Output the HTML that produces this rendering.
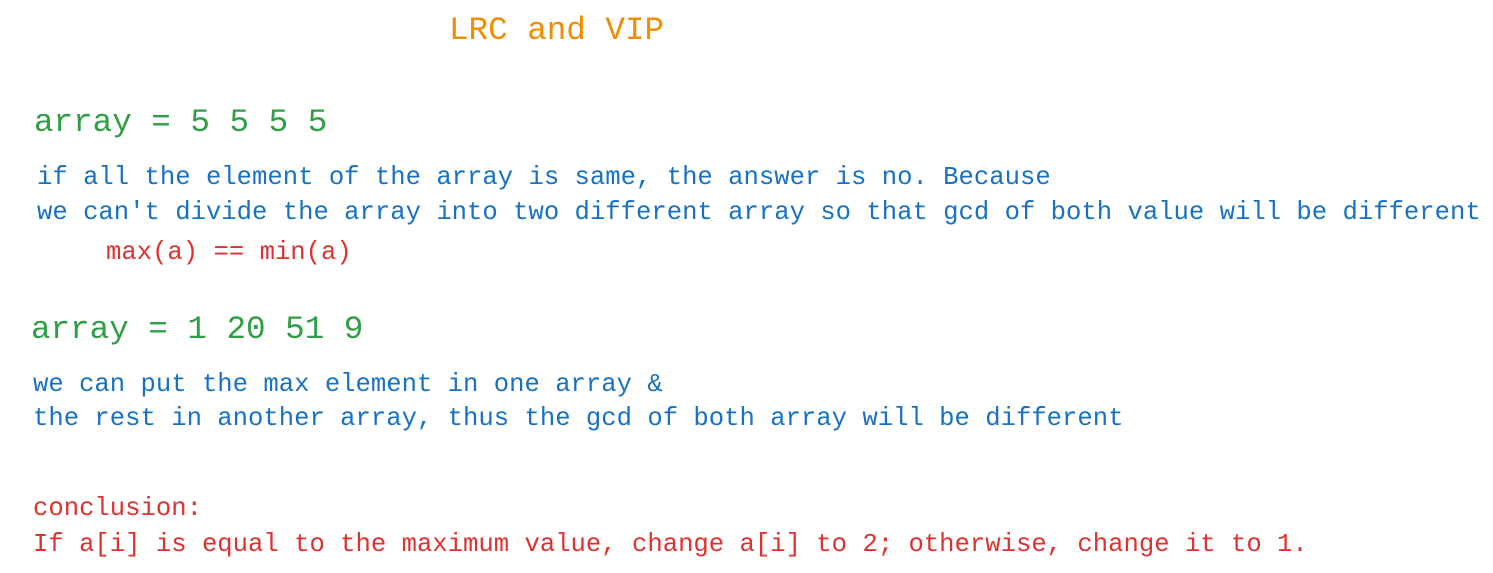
<!DOCTYPE html>
<html><head><meta charset="utf-8"><style>
html,body{margin:0;padding:0;background:#fff;}
body{width:1493px;height:573px;position:relative;overflow:hidden;font-family:"Liberation Mono",monospace;}
.t{position:absolute;white-space:pre;line-height:1;}
.big{font-size:32.6px;}
.sm{font-size:25.6px;}
.o{color:#f08c00}.g{color:#2f9e44}.b{color:#1971c2}.r{color:#e03131}
</style></head><body>
<div class="t big o" style="left:449px;top:15px">LRC and VIP</div>
<div class="t big g" style="left:34px;top:107px">array = 5 5 5 5</div>
<div class="t sm b" style="left:37px;top:165px">if all the element of the array is same, the answer is no. Because</div>
<div class="t sm b" style="left:37px;top:200px">we can't divide the array into two different array so that gcd of both value will be different</div>
<div class="t sm r" style="left:106px;top:240px">max(a) == min(a)</div>
<div class="t big g" style="left:31px;top:314px">array = 1 20 51 9</div>
<div class="t sm b" style="left:33px;top:372px">we can put the max element in one array &amp;</div>
<div class="t sm b" style="left:33px;top:406px">the rest in another array, thus the gcd of both array will be different</div>
<div class="t sm r" style="left:33px;top:496px">conclusion:</div>
<div class="t sm r" style="left:33px;top:532px">If a[i] is equal to the maximum value, change a[i] to 2; otherwise, change it to 1.</div>
</body></html>
